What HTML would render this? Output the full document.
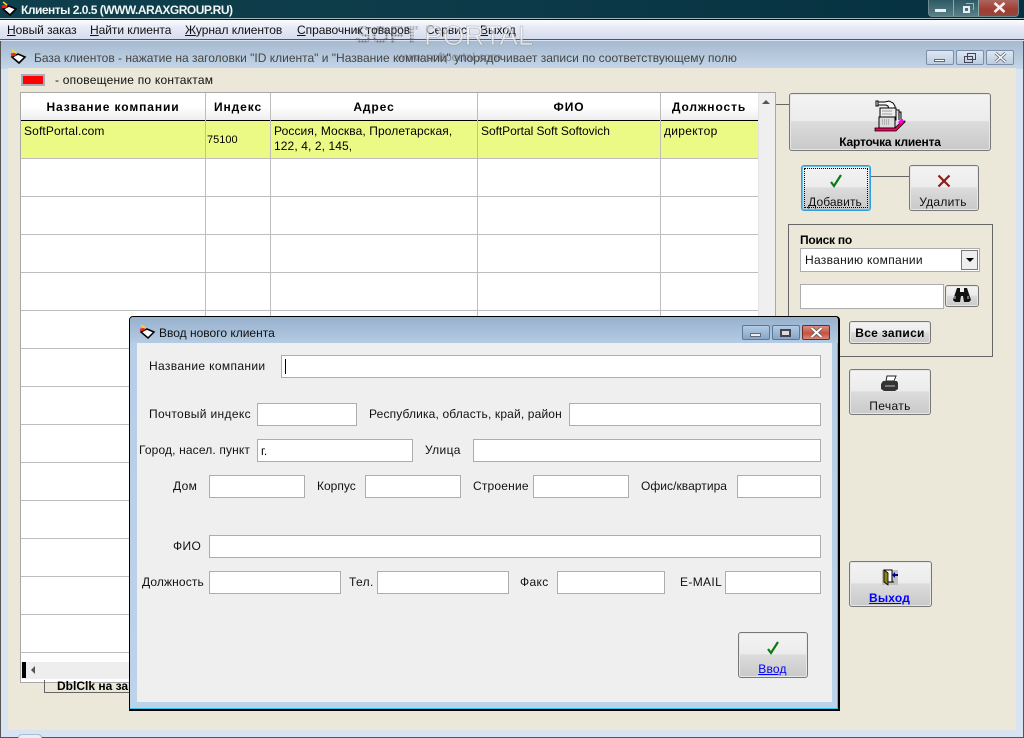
<!DOCTYPE html>
<html><head><meta charset="utf-8">
<style>
html,body{margin:0;padding:0;width:1024px;height:738px;overflow:hidden;background:#d8e4f2;}
body{position:relative;font-family:"Liberation Sans",sans-serif;font-size:12px;color:#000;}
div,span,svg{position:absolute;box-sizing:border-box;}
.t{white-space:nowrap;line-height:14px;}
u{text-decoration:underline;}
.b{font-weight:bold;}
.f{background:#fff;border:1px solid #adadad;}
.l{white-space:nowrap;line-height:14px;letter-spacing:.35px;color:#111;}
.m{letter-spacing:-.05px;}
.btn{border:1px solid #777;border-radius:3px;background:linear-gradient(#f3f3f3 0,#ececec 48%,#dcdcdc 49%,#c9c9c9 100%);box-shadow:inset 0 0 0 1px #e8e8e8;}
.hl{left:21px;width:737px;height:1px;background:#bdbdbd;}
.vl{top:93px;width:1px;height:560px;background:#bdbdbd;}
.wb{border:1px solid #7b8ea6;border-radius:2px;background:linear-gradient(#dce7f3,#bccde0);}
.h{letter-spacing:.9px;}
</style></head><body>

<!-- main title -->
<div style="left:0;top:0;width:1024px;height:19px;background:linear-gradient(90deg,#0e3f4c,#0d3a48 50%,#04303f);border-bottom:1px solid #9fb6bd;"></div>
<svg style="left:1px;top:1px" width="16" height="16" viewBox="0 0 16 16"><path d="M2 8l6-3 7 3-6 6z" fill="#fff" stroke="#000" stroke-width="1.600"/><path d="M1 6l5-1" stroke="#e22" stroke-width="3"/><path d="M2 1l4 3" stroke="#fd0" stroke-width="1.500"/></svg>
<div class="t b" style="left:21px;top:3px;color:#f2f6f6;font-size:12px;letter-spacing:-.5px;">Клиенты 2.0.5 (WWW.ARAXGROUP.RU)</div>
<div style="left:928px;top:0;width:91px;height:17px;border:1px solid #6d8a90;border-top:0;border-radius:0 0 4px 4px;background:linear-gradient(#2e5a64,#5a7f88);"></div>
<div style="left:953px;top:0;width:1px;height:16px;background:#8aa;"></div>
<div style="left:978px;top:0;width:1px;height:16px;background:#8aa;"></div>
<div style="left:979px;top:0;width:39px;height:16px;background:linear-gradient(#a9665f,#a23c30 60%,#8f4a40);border-radius:0 0 3px 0;"></div>
<div style="left:935px;top:9px;width:11px;height:3px;background:#eee;"></div>
<div style="left:963px;top:6px;width:7px;height:7px;border:2px solid #e8eef0;"></div>
<div style="left:966px;top:3px;width:8px;height:7px;border:1px solid #9fb3b8;border-bottom:0;border-left:0;"></div>
<svg style="left:993px;top:2px" width="13" height="11" viewBox="0 0 13 11"><path d="M1.500 1l10 9M11.500 1l-10 9" stroke="#f0f0f0" stroke-width="2.600"/></svg>
<div style="left:0;top:19px;width:1024px;height:1px;background:#111;"></div>

<!-- menu -->
<div style="left:0;top:20px;width:1024px;height:20px;background:linear-gradient(#fbfcfe,#e6eaf6 40%,#d6dcee);border-bottom:1px solid #555;"></div>
<div class="l m" style="left:7px;top:23px;"><u>Н</u>овый заказ</div>
<div class="l m" style="left:90px;top:23px;"><u>Н</u>айти клиента</div>
<div class="l m" style="left:185px;top:23px;"><u>Ж</u>урнал клиентов</div>
<div class="l m" style="left:297px;top:23px;"><u>С</u>правочник товаров</div>
<div class="l m" style="left:426px;top:23px;">Сервис</div>
<div class="l m" style="left:480px;top:23px;"><u>В</u>ыход</div>

<!-- child window title -->
<div style="left:0;top:41px;width:1024px;height:28px;background:linear-gradient(#a6bacf,#c4d5e8);"></div>
<svg style="left:9px;top:49px" width="18" height="16" viewBox="0 0 18 16"><path d="M3 8l6-3 7 3-6 6z" fill="#fff" stroke="#000" stroke-width="1.600"/><path d="M2 6l5-1" stroke="#e22" stroke-width="3"/><path d="M3 1l4 3" stroke="#fd0" stroke-width="1.500"/></svg>
<div class="l" style="left:34px;top:51px;color:#444;letter-spacing:0;">База клиентов - нажатие на заголовки "ID клиента" и "Название компании" упорядочивает записи по соответствующему полю</div>
<div class="wb" style="left:926px;top:50px;width:28px;height:15px;"></div>
<div style="left:934px;top:59px;width:11px;height:3px;background:#fff;border:1px solid #667;"></div>
<div class="wb" style="left:956px;top:50px;width:28px;height:15px;"></div>
<div style="left:964px;top:56px;width:9px;height:7px;border:1px solid #445;"></div>
<div style="left:967px;top:53px;width:9px;height:7px;border:1px solid #445;"></div>
<div class="wb" style="left:986px;top:50px;width:28px;height:15px;"></div>
<svg style="left:994px;top:52px" width="13" height="11" viewBox="0 0 13 11"><path d="M1.500 1l10 9M11.500 1l-10 9" stroke="#667" stroke-width="3"/><path d="M1.500 1l10 9M11.500 1l-10 9" stroke="#fff" stroke-width="1.500"/></svg>

<!-- frame -->
<div style="left:0;top:41px;width:1px;height:697px;background:#555;"></div>
<div style="left:1023px;top:41px;width:1px;height:697px;background:#555;"></div>
<div style="left:0;top:737px;width:1024px;height:1px;background:#555;"></div>
<div style="left:8px;top:68px;width:1008px;height:662px;background:#ebe8d9;"></div>

<!-- legend -->
<div style="left:21px;top:74px;width:24px;height:12px;background:#f00;border:2px solid #a9aeb8;"></div>
<div class="l" style="left:55px;top:73px;letter-spacing:.22px;">- оповещение по контактам</div>

<!-- grid -->
<div style="left:20px;top:92px;width:756px;height:591px;background:#fff;border:1px solid #a8a8a8;"></div>
<div style="left:21px;top:93px;width:737px;height:27px;background:linear-gradient(#fff,#fff 50%,#eeeeee);"></div>
<div style="left:21px;top:120px;width:737px;height:1px;background:#000;"></div>
<div style="left:21px;top:121px;width:737px;height:37px;background:#ebf985;"></div>
<div class="hl" style="top:158px"></div><div class="hl" style="top:196px"></div><div class="hl" style="top:234px"></div><div class="hl" style="top:272px"></div><div class="hl" style="top:310px"></div><div class="hl" style="top:348px"></div><div class="hl" style="top:386px"></div><div class="hl" style="top:424px"></div><div class="hl" style="top:462px"></div><div class="hl" style="top:500px"></div><div class="hl" style="top:538px"></div><div class="hl" style="top:576px"></div><div class="hl" style="top:614px"></div><div class="hl" style="top:652px"></div>
<div class="vl" style="left:205px"></div><div class="vl" style="left:270px"></div><div class="vl" style="left:477px"></div><div class="vl" style="left:660px"></div>
<div class="t b h" style="left:21px;top:100px;width:184px;text-align:center;">Название компании</div>
<div class="t b h" style="left:206px;top:100px;width:64px;text-align:center;">Индекс</div>
<div class="t b h" style="left:271px;top:100px;width:206px;text-align:center;">Адрес</div>
<div class="t b h" style="left:478px;top:100px;width:182px;text-align:center;">ФИО</div>
<div class="t b h" style="left:661px;top:100px;width:96px;text-align:center;">Должность</div>
<div class="t" style="left:24px;top:124px;letter-spacing:.13px;">SoftPortal.com</div>
<div class="t" style="left:207px;top:133px;font-size:11px;">75100</div>
<div class="t" style="left:274px;top:124px;letter-spacing:.1px;line-height:15px;">Россия, Москва, Пролетарская,<br>122, 4, 2, 145,</div>
<div class="t" style="left:481px;top:124px;letter-spacing:-.05px;">SoftPortal Soft Softovich</div>
<div class="t" style="left:664px;top:124px;letter-spacing:.3px;">директор</div>
<!-- scrollbars -->
<div style="left:758px;top:93px;width:17px;height:586px;background:#efefef;border-left:1px solid #e3e3e3;"></div>
<div style="left:762px;top:100px;width:0;height:0;border:4px solid transparent;border-top:0;border-bottom:4px solid #555;"></div>
<div style="left:21px;top:662px;width:737px;height:17px;background:#eee;"></div>
<div style="left:22px;top:662px;width:4px;height:16px;background:#000;"></div>
<div style="left:31px;top:666px;width:0;height:0;border:4px solid transparent;border-left:0;border-right:4px solid #555;"></div>
<div style="left:44px;top:680px;width:130px;height:13px;border:1px solid #666;border-top:0;"></div>
<div class="t b" style="left:57px;top:679px;">DblClk на записи</div>
<div style="left:776px;top:104px;width:13px;height:1px;background:#666;"></div>

<!-- right panel -->
<div class="btn" style="left:789px;top:93px;width:202px;height:58px;"></div>
<svg style="left:874px;top:98px" width="32" height="34" viewBox="0 0 32 34"><path d="M2 3h2v5H2zM4 4h7l4-1 4 2 2 3v3h-6l-1-3-2-1H4z" fill="#fff" stroke="#000"/><rect x="6" y="10" width="16" height="12" fill="#eee" stroke="#000"/><path d="M8 13h10M8 16h10" stroke="#999"/><path d="M22 12h3v10M25 14h2v8" fill="#ddd" stroke="#000"/><rect x="5" y="19" width="16" height="11" fill="#ddd" stroke="#000"/><path d="M8 22h8M8 24h8M8 26h8" stroke="#888" stroke-dasharray="1 1"/><path d="M1 30h20l7-7h3v1l-9 9H1z" fill="#f30060" stroke="#000" stroke-width=".8"/><path d="M24 24l3-3h2v2l-3 3z" fill="#f0f"/></svg>
<div class="t b" style="left:789px;top:135px;width:202px;text-align:center;letter-spacing:-.2px;">Карточка клиента</div>

<div class="btn" style="left:801px;top:165px;width:70px;height:46px;border-color:#2f9fdc;box-shadow:0 0 0 1px #66bdea inset;"></div>
<div style="left:804px;top:168px;width:64px;height:40px;border:1px dotted #000;"></div>
<svg style="left:829px;top:174px" width="14" height="14" viewBox="0 0 14 14"><path d="M2 8l3 4 7-11" fill="none" stroke="#0a7a14" stroke-width="2.200"/></svg>
<div class="l" style="left:800px;top:195px;width:70px;text-align:center;letter-spacing:.1px;"><u>Д</u>обавить</div>
<div style="left:871px;top:176px;width:38px;height:1px;background:#666;"></div>
<div class="btn" style="left:909px;top:165px;width:70px;height:46px;"></div>
<svg style="left:937px;top:174px" width="14" height="14" viewBox="0 0 14 14"><path d="M1.500 1.500l11 11M12.500 1.500l-11 11" fill="none" stroke="#8b1c16" stroke-width="2.200"/></svg>
<div class="l" style="left:908px;top:195px;width:70px;text-align:center;letter-spacing:.25px;">Удалить</div>

<div style="left:788px;top:224px;width:205px;height:133px;border:1px solid #666;"></div>
<div class="t b" style="left:800px;top:233px;letter-spacing:-.25px;">Поиск по</div>
<div class="f" style="left:800px;top:248px;width:180px;height:24px;"></div>
<div class="l" style="left:805px;top:253px;letter-spacing:.3px;">Названию компании</div>
<div style="left:961px;top:250px;width:17px;height:20px;background:#eee;border:1px solid #777;"></div>
<div style="left:966px;top:258px;width:0;height:0;border:4px solid transparent;border-bottom:0;border-top:4px solid #000;"></div>
<div class="f" style="left:800px;top:284px;width:144px;height:25px;"></div>
<div class="btn" style="left:945px;top:285px;width:34px;height:22px;"></div>
<svg style="left:952px;top:287px" width="20" height="16" viewBox="0 0 20 16"><path d="M5 1h3v4h4V1h3l4 12-2 2h-5l-1-6H9l-1 6H3l-2-2z" fill="#111"/><path d="M3 9v3M16 9v3" stroke="#ccc"/></svg>
<div class="btn" style="left:849px;top:321px;width:82px;height:23px;"></div>
<div class="t b" style="left:849px;top:326px;width:82px;text-align:center;letter-spacing:.3px;">Все записи</div>

<div class="btn" style="left:849px;top:369px;width:82px;height:46px;"></div>
<svg style="left:880px;top:375px" width="20" height="18" viewBox="0 0 20 18"><path d="M7 1h9l-2 5H6z" fill="#fff" stroke="#222"/><path d="M3 6h14l1 2v6l-3 2H4l-3-2V9z" fill="#333"/><path d="M5 11h10" stroke="#bbb"/></svg>
<div class="l" style="left:849px;top:399px;width:82px;text-align:center;">Печать</div>

<div class="btn" style="left:849px;top:561px;width:83px;height:46px;"></div>
<div style="left:882px;top:570px;width:16px;height:15px;background:#c0c0c0;"></div>
<svg style="left:882px;top:569px" width="16" height="17" viewBox="0 0 16 17"><rect x="2" y="1" width="8" height="12" fill="#fff" stroke="#000"/><path d="M2 1l4 3v12l-4-3z" fill="#8a8412" stroke="#000" stroke-width=".8"/><path d="M6 13h6" stroke="#000"/><path d="M10 6l3-3v2h3v2h-3v2z" fill="#00008b"/></svg>
<div class="t b" style="left:849px;top:591px;width:81px;text-align:center;color:#00f;text-decoration:underline;letter-spacing:.2px;">Выход</div>

<!-- dialog -->
<div style="left:129px;top:316px;width:711px;height:395px;background:linear-gradient(#b5cde6,#bcd3ea);border:1px solid #000;border-bottom-width:2px;border-right-width:2px;border-radius:4px 4px 0 0;box-shadow:inset -1px -1px 0 #35c4e8;"></div>
<div style="left:130px;top:317px;width:708px;height:26px;background:linear-gradient(#97b0cc,#b4cbe3);border-radius:3px 3px 0 0;"></div>
<div style="left:137px;top:343px;width:695px;height:359px;background:#efefef;"></div>
<svg style="left:138px;top:325px" width="18" height="15" viewBox="0 0 18 15"><path d="M3 7l6-3 7 3-6 6z" fill="#fff" stroke="#000" stroke-width="1.500"/><path d="M2 5l5-1" stroke="#e22" stroke-width="2.500"/><path d="M3 0l4 3" stroke="#fd0" stroke-width="1.500"/></svg>
<div class="l" style="left:159px;top:326px;color:#111;letter-spacing:0;">Ввод нового клиента</div>
<div class="wb" style="left:742px;top:325px;width:28px;height:15px;background:linear-gradient(#b3cbe4,#86a6c8);border-color:#5f7896;"></div>
<div style="left:750px;top:333px;width:11px;height:4px;background:#eee;border:1px solid #667;"></div>
<div class="wb" style="left:772px;top:325px;width:28px;height:15px;background:linear-gradient(#b3cbe4,#86a6c8);border-color:#5f7896;"></div>
<div style="left:780px;top:329px;width:11px;height:8px;border:2px solid #445;background:#ddd;"></div>
<div style="left:802px;top:325px;width:28px;height:15px;border:1px solid #6d2a22;border-radius:2px;background:linear-gradient(#d99186,#c8503f 55%,#d6887a);"></div>
<svg style="left:810px;top:327px" width="13" height="11" viewBox="0 0 13 11"><path d="M1.500 1l10 9M11.500 1l-10 9" stroke="#555" stroke-width="3.400"/><path d="M1.500 1l10 9M11.500 1l-10 9" stroke="#fff" stroke-width="2"/></svg>

<div class="l" style="left:149px;top:359px;">Название компании</div>
<div class="f" style="left:281px;top:355px;width:540px;height:23px;"></div>
<div style="left:285px;top:359px;width:1px;height:15px;background:#000;"></div>

<div class="l" style="left:149px;top:407px;">Почтовый индекс</div>
<div class="f" style="left:257px;top:403px;width:100px;height:23px;"></div>
<div class="l" style="left:369px;top:407px;letter-spacing:.15px;">Республика, область, край, район</div>
<div class="f" style="left:569px;top:403px;width:252px;height:23px;"></div>

<div class="l" style="left:139px;top:443px;letter-spacing:.14px;">Город, насел. пункт</div>
<div class="f" style="left:257px;top:439px;width:156px;height:23px;"></div>
<div class="t" style="left:261px;top:444px;">г.</div>
<div class="l" style="left:425px;top:443px;">Улица</div>
<div class="f" style="left:473px;top:439px;width:348px;height:23px;"></div>

<div class="l" style="left:173px;top:479px;">Дом</div>
<div class="f" style="left:209px;top:475px;width:96px;height:23px;"></div>
<div class="l" style="left:317px;top:479px;letter-spacing:0;">Корпус</div>
<div class="f" style="left:365px;top:475px;width:96px;height:23px;"></div>
<div class="l" style="left:473px;top:479px;letter-spacing:.2px;">Строение</div>
<div class="f" style="left:533px;top:475px;width:96px;height:23px;"></div>
<div class="l" style="left:641px;top:479px;letter-spacing:.05px;">Офис/квартира</div>
<div class="f" style="left:737px;top:475px;width:84px;height:23px;"></div>

<div class="l" style="left:173px;top:539px;">ФИО</div>
<div class="f" style="left:209px;top:535px;width:612px;height:23px;"></div>

<div class="l" style="left:142px;top:575px;letter-spacing:.12px;">Должность</div>
<div class="f" style="left:209px;top:571px;width:132px;height:23px;"></div>
<div class="l" style="left:349px;top:575px;">Тел.</div>
<div class="f" style="left:377px;top:571px;width:132px;height:23px;"></div>
<div class="l" style="left:520px;top:575px;">Факс</div>
<div class="f" style="left:557px;top:571px;width:108px;height:23px;"></div>
<div class="l" style="left:680px;top:575px;">E-MAIL</div>
<div class="f" style="left:725px;top:571px;width:96px;height:23px;"></div>

<div class="btn" style="left:738px;top:632px;width:70px;height:46px;"></div>
<svg style="left:766px;top:641px" width="14" height="14" viewBox="0 0 14 14"><path d="M2 8l3 4 7-11" fill="none" stroke="#0a7a14" stroke-width="2.200"/></svg>
<div class="t" style="left:738px;top:662px;width:69px;text-align:center;color:#00f;text-decoration:underline;letter-spacing:.2px;">Ввод</div>

<!-- watermark -->
<div class="t" style="left:424px;top:21px;font-size:28px;line-height:30px;color:rgba(255,255,255,.6);-webkit-text-stroke:.6px rgba(120,120,120,.55);">PORTAL</div>
<div class="t b" style="left:355px;top:22px;font-size:24px;line-height:28px;color:transparent;background-image:radial-gradient(circle,rgba(90,90,90,.75) 1px,transparent 1.2px);background-size:3px 3px;-webkit-background-clip:text;background-clip:text;">SOFT</div>
<div class="t" style="left:397px;top:50px;font-size:12px;color:rgba(90,90,90,.55);">www.softportal.com</div>

<!-- bottom taskbar hint -->
<div style="left:18px;top:734px;width:24px;height:4px;background:#e8eef5;border:1px solid #a9bcd0;border-bottom:0;border-radius:12px 12px 0 0;"></div>
</body></html>
